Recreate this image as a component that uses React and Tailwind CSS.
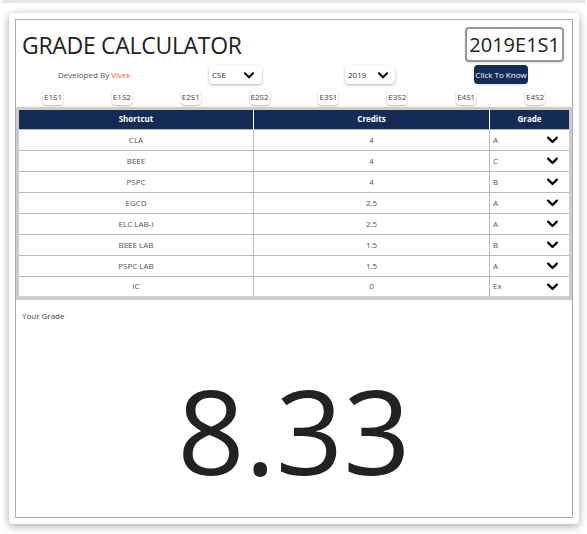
const F = { fontFamily: '"Open Sans", "Liberation Sans", sans-serif' };
const Chev = ({ s = 16 }) => (
  <svg width={s} height={s} viewBox="0 0 24 24" fill="none" stroke="#000" strokeWidth="3.5" strokeLinecap="round" strokeLinejoin="round"><path d="M5 9l7 7 7-7" /></svg>
);
const rows = [
  ["CLA", "4", "A"], ["BEEE", "4", "C"], ["PSPC", "4", "B"], ["EGCD", "2.5", "A"],
  ["ELC LAB-I", "2.5", "A"], ["BEEE LAB", "1.5", "B"], ["PSPC LAB", "1.5", "A"], ["IC", "0", "Ex"],
];
const sems = ["E1S1", "E1S2", "E2S1", "E2S2", "E3S1", "E3S2", "E4S1", "E4S2"];
export default function App() {
  return (
    <div className="w-[587px] h-[534px] bg-white relative" style={F}>
      <div className="h-[3px] bg-[#e5e5e5] mx-[2px]"></div>
      <div className="mt-[10px] ml-[9px] w-[570px] h-[511px] bg-white rounded shadow-[0_2px_8px_rgba(0,0,0,0.35)] p-[6px]">
        <div className="border border-[#aaa] h-full flex flex-col">
          <div className="flex justify-between items-start pl-[6px] pr-[8px] pt-[7px]">
            <div className="text-[23px] text-[#222] mt-[1px] tracking-[-0.3px]">GRADE CALCULATOR</div>
            <div className="border-2 border-[#999] rounded-[4px] text-[20px] text-[#222] px-[2px] h-[35px] flex items-center shadow">2019E1S1</div>
          </div>
          <div className="flex items-center h-[22px] mt-[1px] text-[8px] text-[#555]">
            <div className="ml-[42px] w-[151px]">Developed By <span className="text-[#f06a3a]">Vivek</span></div>
            <div className="w-[53px] h-[18px] rounded shadow-[0_1px_3px_rgba(0,0,0,0.3)] flex items-center justify-between pl-[3px] pr-[6px] text-[#333]">CSE<Chev s={14} /></div>
            <div className="ml-[83px] w-[50px] h-[18px] rounded shadow-[0_1px_3px_rgba(0,0,0,0.3)] flex items-center justify-between pl-[3px] pr-[5px] text-[#333]">2019<Chev s={14} /></div>
            <div className="ml-[79px] w-[54px] h-[19px] rounded bg-[#132b55] text-white flex items-center justify-center shadow">Click To Know</div>
          </div>
          <div className="flex justify-between px-[27px] mt-[3px] mb-[2px] text-[8px] text-[#444]">
            {sems.map(s => <div key={s} className="h-[16px] px-[1px] rounded-sm shadow-[0_1px_2px_rgba(0,0,0,0.3)] flex items-center">{s}</div>)}
          </div>
          <table className="border-collapse border-[3px] border-[#ccc] text-[8px] w-full table-fixed">
            <thead>
              <tr className="bg-[#132b55] text-white h-[21px] font-bold">
                <th className="w-[236px] border-r border-white font-bold">Shortcut</th>
                <th className="w-[236px] border-r border-white font-bold">Credits</th>
                <th className="font-bold">Grade</th>
              </tr>
            </thead>
            <tbody>
              {rows.map(r => (
                <tr key={r[0]} className="h-[21px] border-t border-[#bbb] text-[#555]">
                  <td className="text-center border-r border-[#bbb]">{r[0]}</td>
                  <td className="text-center border-r border-[#bbb]">{r[1]}</td>
                  <td className="px-[3px]"><div className="flex justify-between items-center pr-[6px]">{r[2]}<Chev s={15} /></div></td>
                </tr>
              ))}
            </tbody>
          </table>
          <div className="border-t border-[#ccc] flex-1 flex flex-col">
            <div className="text-[8px] text-[#444] ml-[6px] mt-[10px]">Your Grade</div>
            <div className="flex-1 flex items-center justify-center text-[118px] text-[#222] pt-[22px] leading-none">8.33</div>
          </div>
        </div>
      </div>
    </div>
  );
}
